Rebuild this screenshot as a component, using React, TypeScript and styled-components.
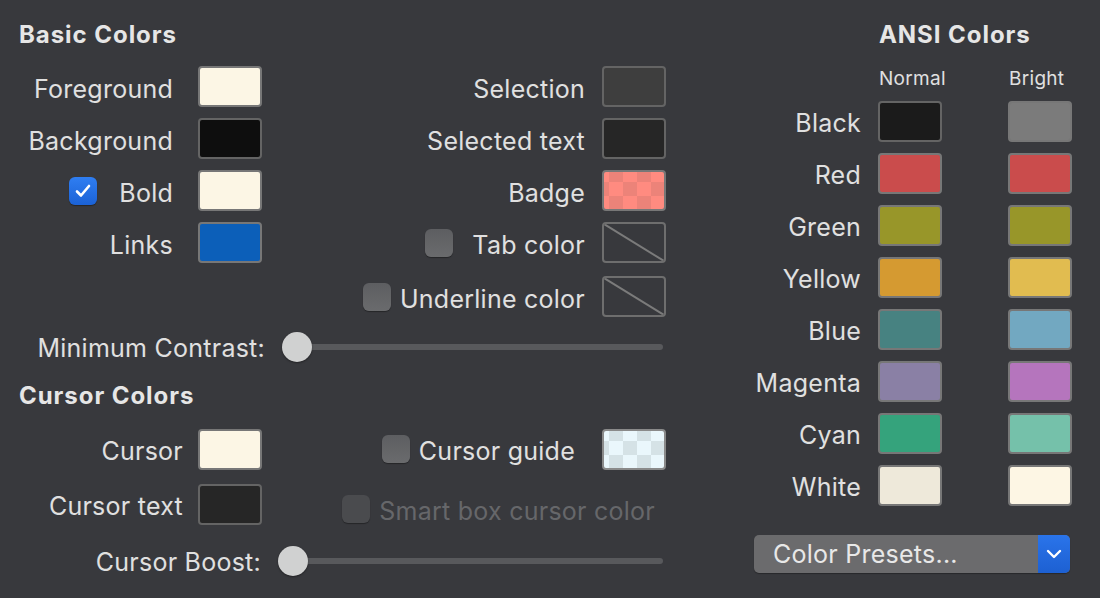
import React from 'react';
import styled, { createGlobalStyle, css } from 'styled-components';

const GlobalStyle = createGlobalStyle`
  html, body {
    margin: 0;
    padding: 0;
    background: #38393d;
  }
  body {
    font-family: Inter, "Noto Sans", "Liberation Sans", sans-serif;
    -webkit-font-smoothing: antialiased;
  }
`;

const basicLeft = [
  { label: 'Foreground', color: '#fcf6e5' },
  { label: 'Background', color: '#0e0e0e', dark: true },
  { label: 'Bold', color: '#fcf6e5', check: true },
  { label: 'Links', color: '#0c5fb9' },
];

const ansi = [
  { name: 'Black', normal: '#1b1b1b', bright: '#7b7b7b' },
  { name: 'Red', normal: '#ca4c4c', bright: '#ca4c4c' },
  { name: 'Green', normal: '#989629', bright: '#989629' },
  { name: 'Yellow', normal: '#d59a31', bright: '#e1bc50' },
  { name: 'Blue', normal: '#478281', bright: '#72a8c1' },
  { name: 'Magenta', normal: '#8a80a5', bright: '#b575bd' },
  { name: 'Cyan', normal: '#35a37c', bright: '#75c1aa' },
  { name: 'White', normal: '#eee9da', bright: '#fdf6e4' },
];

const App: React.FC = () => {
  return (
    <>
      <GlobalStyle />
      <Window>
        <LeftPanel>
          <SectionTitle>Basic Colors</SectionTitle>
          <BasicGrid>
            <ColumnA>
              {basicLeft.map((item) => (
                <Row key={item.label} $gap={25}>
                  {item.check ? (
                    <CheckGroup $gap={22}>
                      <CheckBox $checked><CheckMark /></CheckBox>
                      <Label>{item.label}</Label>
                    </CheckGroup>
                  ) : (
                    <Label>{item.label}</Label>
                  )}
                  <Swatch $color={item.color} $dark={item.dark} />
                </Row>
              ))}
            </ColumnA>
            <ColumnB>
              <Row $gap={17}>
                <Label>Selection</Label>
                <Swatch $color="#3e3e3e" $dark />
              </Row>
              <Row $gap={17}>
                <Label>Selected text</Label>
                <Swatch $color="#262626" $dark />
              </Row>
              <Row $gap={17}>
                <Label>Badge</Label>
                <Swatch $checker={['#ec8379', '#ff8b80']} />
              </Row>
              <Row $gap={17}>
                <CheckGroup $gap={19}>
                  <CheckBox />
                  <Label>Tab color</Label>
                </CheckGroup>
                <EmptySwatch><NoColor /></EmptySwatch>
              </Row>
              <Row $gap={17} $top={2}>
                <CheckGroup $gap={9}>
                  <CheckBox />
                  <Label>Underline color</Label>
                </CheckGroup>
                <EmptySwatch><NoColor /></EmptySwatch>
              </Row>
            </ColumnB>
          </BasicGrid>

          <SliderRow $top={15}>
            <SliderLabel $width={246}>Minimum Contrast:</SliderLabel>
            <Slider $width={381} />
          </SliderRow>

          <SectionTitle $top={21}>Cursor Colors</SectionTitle>
          <CursorGrid>
            <CursorColumn>
              <CursorRow>
                <Label>Cursor</Label>
                <Swatch $color="#fcf6e5" />
              </CursorRow>
              <CursorRow>
                <Label>Cursor text</Label>
                <Swatch $color="#262626" $dark />
              </CursorRow>
            </CursorColumn>
            <CursorColumn $wide>
              <CursorRow $gap={27}>
                <CheckGroup $gap={9}>
                  <CheckBox />
                  <Label>Cursor guide</Label>
                </CheckGroup>
                <Swatch $checker={['#d5e2e6', '#eaf7fc']} $light />
              </CursorRow>
              <CursorRow $pad={11} $top={5}>
                <CheckGroup $gap={9}>
                  <CheckBox $disabled />
                  <Label $disabled>Smart box cursor color</Label>
                </CheckGroup>
              </CursorRow>
            </CursorColumn>
          </CursorGrid>

          <SliderRow $top={16}>
            <SliderLabel $width={242}>Cursor Boost:</SliderLabel>
            <Slider $width={385} />
          </SliderRow>
        </LeftPanel>

        <RightPanel>
          <AnsiTitle>ANSI Colors</AnsiTitle>
          <AnsiGrid>
            <span />
            <ColumnHead>Normal</ColumnHead>
            <ColumnHead>Bright</ColumnHead>
            {ansi.map((c) => (
              <React.Fragment key={c.name}>
                <AnsiLabel>{c.name}</AnsiLabel>
                <Swatch $color={c.normal} $dark={c.name === 'Black'} />
                <Swatch $color={c.bright} />
              </React.Fragment>
            ))}
          </AnsiGrid>
          <Popup>
            <PopupText>Color Presets...</PopupText>
            <PopupArrow>
              <svg width="16" height="10" viewBox="0 0 16 10">
                <path d="M2 2 L8 8 L14 2" fill="none" stroke="#fff" strokeWidth="2.4" strokeLinecap="round" strokeLinejoin="round" />
              </svg>
            </PopupArrow>
          </Popup>
        </RightPanel>
      </Window>
    </>
  );
};

const CheckMark = () => (
  <svg width="18" height="16" viewBox="0 0 18 16">
    <path d="M3 8.5 L7 12.5 L15 3" fill="none" stroke="#fff" strokeWidth="2.6" strokeLinecap="round" strokeLinejoin="round" />
  </svg>
);

const NoColor = () => (
  <svg width="100%" height="100%" viewBox="0 0 60 38" preserveAspectRatio="none">
    <line x1="0" y1="0" x2="60" y2="38" stroke="#7b7b7b" strokeWidth="2" />
  </svg>
);

export default App;

const labelFont = css`
  font-size: 25px;
  line-height: 30px;
  letter-spacing: 0.25px;
  white-space: nowrap;
`;

const titleFont = css`
  font-size: 24px;
  font-weight: 700;
  line-height: 26px;
  letter-spacing: 0.95px;
  color: #e6e6e6;
  white-space: nowrap;
`;

const Window = styled.div`
  width: 1100px;
  height: 598px;
  display: flex;
  background: #38393d;
  color: #e0e0e0;
  overflow: hidden;
`;

const LeftPanel = styled.div`
  width: 647px;
  padding: 22px 0 0 19px;
  display: flex;
  flex-direction: column;
`;

const SectionTitle = styled.div<{ $top?: number }>`
  ${titleFont};
  margin-top: ${(p) => p.$top || 0}px;
`;

const BasicGrid = styled.div`
  display: flex;
  justify-content: space-between;
  margin-top: 18px;
`;

const ColumnA = styled.div`
  width: 243px;
  display: flex;
  flex-direction: column;
  gap: 11px;
`;

const ColumnB = styled.div`
  width: 326px;
  display: flex;
  flex-direction: column;
  gap: 11px;
`;

const Row = styled.div<{ $gap: number; $top?: number }>`
  height: 41px;
  display: flex;
  align-items: center;
  justify-content: flex-end;
  gap: ${(p) => p.$gap}px;
  margin-top: ${(p) => p.$top || 0}px;
`;

const CheckGroup = styled.div<{ $gap: number }>`
  display: flex;
  align-items: center;
  gap: ${(p) => p.$gap}px;
`;

const Label = styled.span<{ $disabled?: boolean }>`
  ${labelFont};
  padding-top: 4px;
  color: ${(p) => (p.$disabled ? '#66676a' : '#e0e0e0')};
`;

const swatchBase = css`
  box-sizing: border-box;
  width: 64px;
  height: 41px;
  border-radius: 4px;
  flex: none;
`;

const Swatch = styled.div<{ $color?: string; $dark?: boolean; $checker?: string[]; $light?: boolean }>`
  ${swatchBase};
  border: 2px solid ${(p) => (p.$dark ? '#646464' : p.$light ? '#8a8a8a' : '#777777')};
  background: ${(p) =>
    p.$checker
      ? `repeating-conic-gradient(${p.$checker[0]} 0 25%, ${p.$checker[1]} 0 50%) 5px 10px / 28px 28px`
      : p.$color};
`;

const EmptySwatch = styled.div`
  ${swatchBase};
  border: 2px solid #6e6e6e;
  overflow: hidden;
  & svg {
    display: block;
  }
`;

const CheckBox = styled.div<{ $checked?: boolean; $disabled?: boolean }>`
  box-sizing: border-box;
  width: 28px;
  height: 28px;
  border-radius: 6px;
  flex: none;
  display: flex;
  align-items: center;
  justify-content: center;
  background: ${(p) =>
    p.$checked
      ? 'linear-gradient(#2f7ef2, #1b62d6)'
      : p.$disabled
      ? '#4a4b4e'
      : 'linear-gradient(#5d5e61, #6a6b6d)'};
  box-shadow: 0 1px 1px rgba(0, 0, 0, 0.35);
`;

const SliderRow = styled.div<{ $top: number }>`
  height: 30px;
  display: flex;
  align-items: center;
  gap: 17px;
  margin-top: ${(p) => p.$top}px;
`;

const SliderLabel = styled.span<{ $width: number }>`
  ${labelFont};
  padding-top: 2px;
  width: ${(p) => p.$width}px;
  text-align: right;
`;

const Slider = styled.div<{ $width: number }>`
  position: relative;
  width: ${(p) => p.$width}px;
  height: 30px;
  &::before {
    content: '';
    position: absolute;
    left: 15px;
    right: 0;
    top: 12px;
    height: 6px;
    border-radius: 3px;
    background: #58595c;
  }
  &::after {
    content: '';
    position: absolute;
    left: 0;
    top: 0;
    width: 30px;
    height: 30px;
    border-radius: 50%;
    background: #d0d1d1;
    box-shadow: 0 1px 2px rgba(0, 0, 0, 0.4);
  }
`;

const CursorGrid = styled.div`
  display: flex;
  margin-top: 19px;
`;

const CursorColumn = styled.div<{ $wide?: boolean }>`
  width: ${(p) => (p.$wide ? 404 : 243)}px;
  display: flex;
  flex-direction: column;
  gap: 13px;
`;

const CursorRow = styled.div<{ $gap?: number; $pad?: number; $top?: number }>`
  height: 42px;
  display: flex;
  align-items: center;
  justify-content: flex-end;
  gap: ${(p) => p.$gap ?? 15}px;
  padding-right: ${(p) => p.$pad || 0}px;
  margin-top: ${(p) => p.$top || 0}px;
`;

const RightPanel = styled.div`
  width: 316px;
  margin-left: 88px;
  padding-top: 22px;
  display: flex;
  flex-direction: column;
`;

const AnsiTitle = styled.div`
  ${titleFont};
  margin-left: 125px;
`;

const AnsiGrid = styled.div`
  display: grid;
  grid-template-columns: 124px 130px 64px;
  grid-template-rows: 23px;
  grid-auto-rows: 42px;
  row-gap: 10px;
  align-items: center;
  margin-top: 19px;
`;

const ColumnHead = styled.div`
  font-size: 19px;
  line-height: 24px;
  letter-spacing: 0.3px;
  margin-left: 1px;
  white-space: nowrap;
  color: #e0e0e0;
`;

const AnsiLabel = styled.span`
  ${labelFont};
  padding-top: 4px;
  text-align: right;
  padding-right: 17px;
`;

const Popup = styled.div`
  margin-top: 29px;
  height: 38px;
  display: flex;
  border-radius: 5px;
  overflow: hidden;
  background: #6b6b6d;
  box-shadow: 0 1px 1px rgba(0, 0, 0, 0.3);
`;

const PopupText = styled.span`
  ${labelFont};
  flex: 1;
  padding-left: 19px;
  line-height: 38px;
  color: #e8e8e8;
`;

const PopupArrow = styled.div`
  width: 32px;
  display: flex;
  align-items: center;
  justify-content: center;
  background: linear-gradient(#2a74ea, #1d60d2);
`;
